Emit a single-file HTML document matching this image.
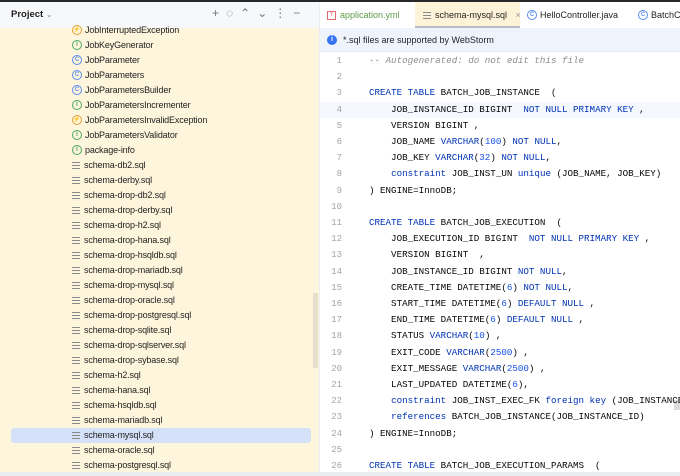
<!DOCTYPE html>
<html><head><meta charset="utf-8"><style>
*{margin:0;padding:0;box-sizing:border-box}
body{width:680px;height:476px;overflow:hidden;background:#fff;position:relative;font-family:"Liberation Sans",sans-serif}
.abs{position:absolute}
.tr{position:absolute;left:72px;height:15px;font-size:9px;line-height:15px;color:#1f1f1f;white-space:nowrap;letter-spacing:-0.15px}
.ic{display:inline-block;width:10px;height:10px;border-radius:50%;vertical-align:middle;position:relative;top:-1px;margin-right:3px;text-align:center;font-size:6px;line-height:8px;font-weight:bold;letter-spacing:0}
.c{border:1px solid #5b8def;color:#5b8def}
.i{border:1px solid #4ea862;color:#4ea862}
.e{border:1px solid #e3a23b;color:#e3a23b}
.f{border:none;border-radius:0;width:8px;height:7px;background:linear-gradient(#8a8a8a 0 1px,transparent 1px 3px,#8a8a8a 3px 4px,transparent 4px 6px,#8a8a8a 6px 7px);margin-right:4px;top:0}
.ln{position:absolute;left:320px;width:22px;text-align:right;font-family:"Liberation Mono",monospace;font-size:9px;color:#a0a3a8;height:16px;line-height:16px}
.cd{position:absolute;left:369px;font-family:"Liberation Mono",monospace;font-size:9.2px;color:#080808;white-space:pre;height:16px;line-height:16px}
.k{color:#0033b3}.n{color:#1750eb}.cm{color:#8c8c8c;font-style:italic}
</style></head><body>
<div class="abs" style="left:0;top:0;width:680px;height:2px;background:#27282c"></div>
<div class="abs" style="left:0;top:2px;width:319px;height:26px;background:#f7f8fa"></div>
<div class="abs" style="left:11px;top:9px;font-size:9.5px;font-weight:bold;color:#1f1f1f">Project <span style="font-weight:normal;color:#888;font-size:8px">⌄</span></div>
<div class="abs" style="left:212px;top:6px;font-size:12px;color:#777;letter-spacing:7px">+◌⌃⌄⋮−</div>
<div class="abs" style="left:0;top:28px;width:319px;height:444px;background:#fdf5dc"></div>
<div class="abs" style="left:11px;top:428px;width:300px;height:15px;background:#d5e1f9;border-radius:3px"></div>
<div class="abs" style="left:313px;top:293px;width:5px;height:75px;background:#e6dfcb"></div>
<div class="tr" style="top:23px"><span class="ic e">⚡</span>JobInterruptedException</div>
<div class="tr" style="top:38px"><span class="ic i">I</span>JobKeyGenerator</div>
<div class="tr" style="top:53px"><span class="ic c">C</span>JobParameter</div>
<div class="tr" style="top:68px"><span class="ic c">C</span>JobParameters</div>
<div class="tr" style="top:83px"><span class="ic c">C</span>JobParametersBuilder</div>
<div class="tr" style="top:98px"><span class="ic i">I</span>JobParametersIncrementer</div>
<div class="tr" style="top:113px"><span class="ic e">⚡</span>JobParametersInvalidException</div>
<div class="tr" style="top:128px"><span class="ic i">I</span>JobParametersValidator</div>
<div class="tr" style="top:143px"><span class="ic i">I</span>package-info</div>
<div class="tr" style="top:158px"><span class="ic f"></span>schema-db2.sql</div>
<div class="tr" style="top:173px"><span class="ic f"></span>schema-derby.sql</div>
<div class="tr" style="top:188px"><span class="ic f"></span>schema-drop-db2.sql</div>
<div class="tr" style="top:203px"><span class="ic f"></span>schema-drop-derby.sql</div>
<div class="tr" style="top:218px"><span class="ic f"></span>schema-drop-h2.sql</div>
<div class="tr" style="top:233px"><span class="ic f"></span>schema-drop-hana.sql</div>
<div class="tr" style="top:248px"><span class="ic f"></span>schema-drop-hsqldb.sql</div>
<div class="tr" style="top:263px"><span class="ic f"></span>schema-drop-mariadb.sql</div>
<div class="tr" style="top:278px"><span class="ic f"></span>schema-drop-mysql.sql</div>
<div class="tr" style="top:293px"><span class="ic f"></span>schema-drop-oracle.sql</div>
<div class="tr" style="top:308px"><span class="ic f"></span>schema-drop-postgresql.sql</div>
<div class="tr" style="top:323px"><span class="ic f"></span>schema-drop-sqlite.sql</div>
<div class="tr" style="top:338px"><span class="ic f"></span>schema-drop-sqlserver.sql</div>
<div class="tr" style="top:353px"><span class="ic f"></span>schema-drop-sybase.sql</div>
<div class="tr" style="top:368px"><span class="ic f"></span>schema-h2.sql</div>
<div class="tr" style="top:383px"><span class="ic f"></span>schema-hana.sql</div>
<div class="tr" style="top:398px"><span class="ic f"></span>schema-hsqldb.sql</div>
<div class="tr" style="top:413px"><span class="ic f"></span>schema-mariadb.sql</div>
<div class="tr" style="top:428px"><span class="ic f"></span>schema-mysql.sql</div>
<div class="tr" style="top:443px"><span class="ic f"></span>schema-oracle.sql</div>
<div class="tr" style="top:458px"><span class="ic f"></span>schema-postgresql.sql</div>
<div class="abs" style="left:319px;top:2px;width:1px;height:470px;background:#ebecf0"></div>
<div class="abs" style="left:415px;top:2px;width:105px;height:26px;background:#fdf3d8;border-bottom:2px solid #b8bcc6"></div>
<div class="abs" style="left:327px;top:10px;font-size:9px;color:#5c9c4a;white-space:nowrap"><span style="display:inline-block;width:9px;height:9px;border:1px solid #e06c75;color:#e06c75;font-size:6px;line-height:7px;text-align:center;vertical-align:middle;margin-right:4px">Y</span>application.yml</div>
<div class="abs" style="left:423px;top:10px;font-size:9px;color:#1f1f1f;white-space:nowrap"><span class="ic f"></span>schema-mysql.sql <span style="color:#999;margin-left:6px">×</span></div>
<div class="abs" style="left:527px;top:10px;font-size:9px;color:#1f1f1f;white-space:nowrap"><span class="ic c">C</span>HelloController.java</div>
<div class="abs" style="left:638px;top:10px;font-size:9px;color:#1f1f1f;white-space:nowrap"><span class="ic c">C</span>BatchCo</div>
<div class="abs" style="left:320px;top:28px;width:360px;height:24px;background:#eff3fc;border-bottom:1px solid #e3e7f0"></div>
<div class="abs" style="left:327px;top:35px;width:10px;height:10px;border-radius:50%;background:#3574f0;color:#fff;font-size:7px;line-height:10px;text-align:center;font-weight:bold">i</div>
<div class="abs" style="left:343px;top:35px;font-size:9px;color:#1f1f1f">*.sql files are supported by WebStorm</div>
<div class="abs" style="left:320px;top:102px;width:360px;height:16px;background:#f5f8fe"></div>
<div class="abs" style="left:674px;top:400px;width:6px;height:10px;background:#ddd"></div>
<div class="ln" style="top:53px">1</div><div class="cd cm" style="top:53px">-- Autogenerated: do not edit this file</div>
<div class="ln" style="top:69px">2</div>
<div class="ln" style="top:85px">3</div><div class="cd" style="top:85px"><span class="k">CREATE TABLE</span> BATCH_JOB_INSTANCE  (</div>
<div class="ln" style="top:102px">4</div><div class="cd" style="top:102px">    JOB_INSTANCE_ID BIGINT  <span class="k">NOT NULL PRIMARY KEY</span> ,</div>
<div class="ln" style="top:118px">5</div><div class="cd" style="top:118px">    VERSION BIGINT ,</div>
<div class="ln" style="top:134px">6</div><div class="cd" style="top:134px">    JOB_NAME <span class="k">VARCHAR</span>(<span class="n">100</span>) <span class="k">NOT NULL</span>,</div>
<div class="ln" style="top:150px">7</div><div class="cd" style="top:150px">    JOB_KEY <span class="k">VARCHAR</span>(<span class="n">32</span>) <span class="k">NOT NULL</span>,</div>
<div class="ln" style="top:166px">8</div><div class="cd" style="top:166px">    <span class="k">constraint</span> JOB_INST_UN <span class="k">unique</span> (JOB_NAME, JOB_KEY)</div>
<div class="ln" style="top:183px">9</div><div class="cd" style="top:183px">) ENGINE=InnoDB;</div>
<div class="ln" style="top:199px">10</div>
<div class="ln" style="top:215px">11</div><div class="cd" style="top:215px"><span class="k">CREATE TABLE</span> BATCH_JOB_EXECUTION  (</div>
<div class="ln" style="top:231px">12</div><div class="cd" style="top:231px">    JOB_EXECUTION_ID BIGINT  <span class="k">NOT NULL PRIMARY KEY</span> ,</div>
<div class="ln" style="top:247px">13</div><div class="cd" style="top:247px">    VERSION BIGINT  ,</div>
<div class="ln" style="top:264px">14</div><div class="cd" style="top:264px">    JOB_INSTANCE_ID BIGINT <span class="k">NOT NULL</span>,</div>
<div class="ln" style="top:280px">15</div><div class="cd" style="top:280px">    CREATE_TIME DATETIME(<span class="n">6</span>) <span class="k">NOT NULL</span>,</div>
<div class="ln" style="top:296px">16</div><div class="cd" style="top:296px">    START_TIME DATETIME(<span class="n">6</span>) <span class="k">DEFAULT NULL</span> ,</div>
<div class="ln" style="top:312px">17</div><div class="cd" style="top:312px">    END_TIME DATETIME(<span class="n">6</span>) <span class="k">DEFAULT NULL</span> ,</div>
<div class="ln" style="top:328px">18</div><div class="cd" style="top:328px">    STATUS <span class="k">VARCHAR</span>(<span class="n">10</span>) ,</div>
<div class="ln" style="top:345px">19</div><div class="cd" style="top:345px">    EXIT_CODE <span class="k">VARCHAR</span>(<span class="n">2500</span>) ,</div>
<div class="ln" style="top:361px">20</div><div class="cd" style="top:361px">    EXIT_MESSAGE <span class="k">VARCHAR</span>(<span class="n">2500</span>) ,</div>
<div class="ln" style="top:377px">21</div><div class="cd" style="top:377px">    LAST_UPDATED DATETIME(<span class="n">6</span>),</div>
<div class="ln" style="top:393px">22</div><div class="cd" style="top:393px">    <span class="k">constraint</span> JOB_INST_EXEC_FK <span class="k">foreign key</span> (JOB_INSTANCE_ID)</div>
<div class="ln" style="top:409px">23</div><div class="cd" style="top:409px">    <span class="k">references</span> BATCH_JOB_INSTANCE(JOB_INSTANCE_ID)</div>
<div class="ln" style="top:426px">24</div><div class="cd" style="top:426px">) ENGINE=InnoDB;</div>
<div class="ln" style="top:442px">25</div>
<div class="ln" style="top:458px">26</div><div class="cd" style="top:458px"><span class="k">CREATE TABLE</span> BATCH_JOB_EXECUTION_PARAMS  (</div>
<div class="abs" style="left:0;top:472px;width:680px;height:4px;background:#ebecf0"></div>
</body></html>
